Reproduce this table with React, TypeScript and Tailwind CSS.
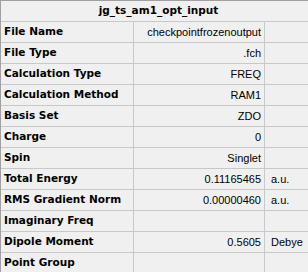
type Row = { label: string; value?: string; unit?: string };

const rows: Row[] = [
  { label: "File Name", value: "checkpointfrozenoutput" },
  { label: "File Type", value: ".fch" },
  { label: "Calculation Type", value: "FREQ" },
  { label: "Calculation Method", value: "RAM1" },
  { label: "Basis Set", value: "ZDO" },
  { label: "Charge", value: "0" },
  { label: "Spin", value: "Singlet" },
  { label: "Total Energy", value: "0.11165465", unit: "a.u." },
  { label: "RMS Gradient Norm", value: "0.00000460", unit: "a.u." },
  { label: "Imaginary Freq" },
  { label: "Dipole Moment", value: "0.5605", unit: "Debye" },
  { label: "Point Group" },
];

const bold = "font-bold font-['DejaVu_Sans',sans-serif] text-[10.5px]";

export default function App() {
  return (
    <div className="w-[308px] h-[272px] overflow-hidden bg-[#f0f0f0] border-t border-l border-[#a0a0a0] text-[11px] text-black font-['Liberation_Sans',Arial,sans-serif]">
      {/* title bar */}
      <div className={`h-[21px] border-b border-[#c8c8c8] flex items-center justify-center pl-2 ${bold}`}>
        jg_ts_am1_opt_input
      </div>

      {/* property rows */}
      {rows.map((r) => (
        <div key={r.label} className="grid grid-cols-[133px_131px_1fr] h-[21px] border-b border-[#c8c8c8]">
          <div className={`border-r border-[#c8c8c8] flex items-center pl-[3px] whitespace-nowrap ${bold}`}>
            {r.label}
          </div>
          <div className="border-r border-[#c8c8c8] flex items-center justify-end pr-[3px] whitespace-nowrap">
            {r.value}
          </div>
          <div className="flex items-center pl-[6px] whitespace-nowrap">{r.unit}</div>
        </div>
      ))}
    </div>
  );
}
